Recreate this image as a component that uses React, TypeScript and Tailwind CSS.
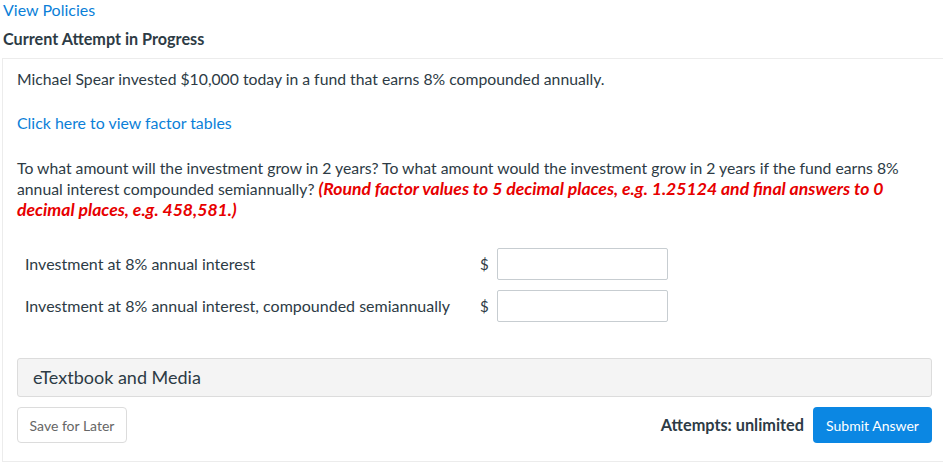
export default function App() {
  const rows = [
    "Investment at 8% annual interest",
    "Investment at 8% annual interest, compounded semiannually",
  ];

  return (
    <div className="w-[943px] h-[462px] overflow-hidden bg-white font-['Lato','Open_Sans',sans-serif] text-[#2d3b45]">
      <div className="pl-[3px] text-[16px] leading-[20px] text-[#0b7fd8]">View Policies</div>
      <div className="pl-[3px] pt-[9px] text-[16.2px] leading-[20px] font-bold">Current Attempt in Progress</div>

      <div className="mt-[9px] ml-[2px] border-t border-l border-b border-[#ececec] pl-[14px] pr-[11px] pt-[9px] pb-[18px]">
        <p className="text-[15.75px] leading-[21px]">
          Michael Spear invested $10,000 today in a fund that earns 8% compounded annually.
        </p>
        <p className="mt-[23px] text-[15.9px] leading-[21px] text-[#0b7fd8]">Click here to view factor tables</p>
        <p className="mt-[24px] text-[15.75px] leading-[21px]">
          To what amount will the investment grow in 2 years? To what amount would the investment grow in 2 years if
          the fund earns 8% annual interest compounded semiannually?{" "}
          <span className="font-bold italic text-[17.6px] leading-[21px] text-[#e70000]">
            (Round factor values to 5 decimal places, e.g. 1.25124 and final answers to 0 decimal places, e.g.
            458,581.)
          </span>
        </p>

        <div className="mt-[28px] flex flex-col gap-[10px] pl-[8px]">
          {rows.map((label) => (
            <div key={label} className="flex items-center text-[16px]">
              <span className="w-[455px]">{label}</span>
              <span className="w-[17px] text-[15px]">$</span>
              <input
                type="text"
                className="h-[32px] w-[171px] rounded-[2px] border border-[#c7cdd1] bg-white px-2 outline-none"
              />
            </div>
          ))}
        </div>

        <div className="mt-[36px] flex h-[39px] items-center rounded-[3px] border border-[#dcdcdc] bg-[#f4f4f4] pl-[15px] text-[18px]">
          eTextbook and Media
        </div>

        <div className="mt-[10px] flex items-center">
          <button className="h-[36px] w-[110px] rounded-[4px] border border-[#dcdcdc] bg-white text-[14px] text-[#666]">
            Save for Later
          </button>
          <div className="ml-auto mr-[9px] text-[16.3px] font-bold">Attempts: unlimited</div>
          <button className="h-[36px] w-[119px] rounded-[4px] bg-[#0b87e3] text-[14px] text-white">
            Submit Answer
          </button>
        </div>
      </div>
    </div>
  );
}
